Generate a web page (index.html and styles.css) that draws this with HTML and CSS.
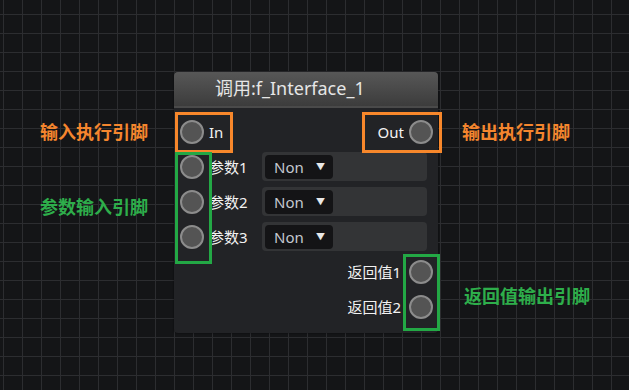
FILE: index.html
```html
<!DOCTYPE html>
<html lang="zh-CN">
<head>
  <meta charset="UTF-8">
  <meta name="viewport" content="width=device-width, initial-scale=1.0">
  <title>调用节点</title>
  <link rel="stylesheet" href="styles.css">
</head>
<body>
  <div class="canvas">
    <div class="node">
      <div class="node-title">调用:f_Interface_1</div>
      <div class="node-body">
        <div class="row">
          <div class="pin-side">
            <span class="pin"></span>
            <span class="pin-label">In</span>
          </div>
          <div class="pin-side right">
            <span class="pin-label">Out</span>
            <span class="pin"></span>
          </div>
        </div>
        <div class="row">
          <div class="pin-side">
            <span class="pin"></span>
            <span class="pin-label">参数1</span>
          </div>
          <div class="field">
            <div class="select">Non<span class="arrow">▼</span></div>
          </div>
        </div>
        <div class="row">
          <div class="pin-side">
            <span class="pin"></span>
            <span class="pin-label">参数2</span>
          </div>
          <div class="field">
            <div class="select">Non<span class="arrow">▼</span></div>
          </div>
        </div>
        <div class="row">
          <div class="pin-side">
            <span class="pin"></span>
            <span class="pin-label">参数3</span>
          </div>
          <div class="field">
            <div class="select">Non<span class="arrow">▼</span></div>
          </div>
        </div>
        <div class="row end">
          <div class="pin-side right ret">
            <span class="pin-label">返回值1</span>
            <span class="pin"></span>
          </div>
        </div>
        <div class="row end">
          <div class="pin-side right ret">
            <span class="pin-label">返回值2</span>
            <span class="pin"></span>
          </div>
        </div>
      </div>
    </div>

    <!-- 标注 -->
    <div class="mark orange box-in"></div>
    <div class="mark orange box-out"></div>
    <div class="mark green box-params"></div>
    <div class="mark green box-returns"></div>

    <div class="note orange-text note-in">输入执行引脚</div>
    <div class="note orange-text note-out">输出执行引脚</div>
    <div class="note green-text note-params">参数输入引脚</div>
    <div class="note green-text note-returns">返回值输出引脚</div>
  </div>
</body>
</html>
```

FILE: styles.css
```css
body {
  margin: 0;
  padding: 0;
  background: #141517;
  font-family: 'Noto Sans', 'Noto Sans CJK SC', sans-serif;
  color: #eee;
}

.canvas {
  position: relative;
  width: 629px;
  height: 390px;
  overflow: hidden;
  background-color: #141517;
  background-image:
    linear-gradient(to right, #2c2d30 1px, transparent 1px),
    linear-gradient(to bottom, #2c2d30 1px, transparent 1px);
  background-size: 19px 19px;
  background-position: 3px 14px;
}

.node {
  position: absolute;
  left: 174px;
  top: 72px;
  width: 264px;
  height: 261px;
  background: #222326;
  border-radius: 4px;
  box-shadow: 0 0 2px rgba(0, 0, 0, 0.6);
}

.node-title {
  height: 34px;
  line-height: 33px;
  padding-left: 41px;
  font-size: 18px;
  color: #e6e6e6;
  background: linear-gradient(to bottom, #575757, #3c3c3c);
  border-radius: 4px 4px 0 0;
  border-bottom: 2px solid #4a4a4a;
}

.node-body {
  padding: 6px 5px 0 6px;
}

.row {
  display: flex;
  align-items: center;
  justify-content: space-between;
  height: 35px;
}

.row.end {
  justify-content: flex-end;
}

.pin-side {
  display: flex;
  align-items: center;
  gap: 5px;
}

.pin-side.ret {
  gap: 8px;
}

.pin {
  width: 20px;
  height: 20px;
  border-radius: 50%;
  background: #545454;
  border: 2px solid #8c8c8c;
}

.pin-label {
  font-size: 15px;
  color: #f2f2f2;
}

.field {
  width: 165px;
  height: 29px;
  margin-right: 6px;
  background: #333436;
  border-radius: 4px;
  display: flex;
  align-items: center;
  padding-left: 3px;
  box-sizing: border-box;
}

.select {
  width: 68px;
  height: 24px;
  background: #141416;
  border-radius: 4px;
  font-size: 15px;
  line-height: 24px;
  color: #c4c8d0;
  padding-left: 9px;
  box-sizing: border-box;
  position: relative;
}

.arrow {
  position: absolute;
  left: 51px;
  top: 0;
  font-size: 9px;
  color: #e8e8e8;
}

.mark {
  position: absolute;
  box-sizing: border-box;
  border: 3px solid;
}

.mark.orange {
  border-color: #f7872b;
}

.mark.green {
  border-color: #23a845;
}

.box-in {
  left: 175px;
  top: 112px;
  width: 58px;
  height: 41px;
}

.box-out {
  left: 362px;
  top: 112px;
  width: 80px;
  height: 41px;
}

.box-params {
  left: 175px;
  top: 152px;
  width: 37px;
  height: 112px;
}

.box-returns {
  left: 403px;
  top: 254px;
  width: 37px;
  height: 77px;
}

.note {
  position: absolute;
  font-size: 18px;
  font-weight: bold;
  line-height: 24px;
}

.orange-text {
  color: #f5862e;
}

.green-text {
  color: #2eae4b;
}

.note-in {
  left: 40px;
  top: 120px;
}

.note-out {
  left: 462px;
  top: 120px;
}

.note-params {
  left: 40px;
  top: 195px;
}

.note-returns {
  left: 464px;
  top: 284px;
}
```
